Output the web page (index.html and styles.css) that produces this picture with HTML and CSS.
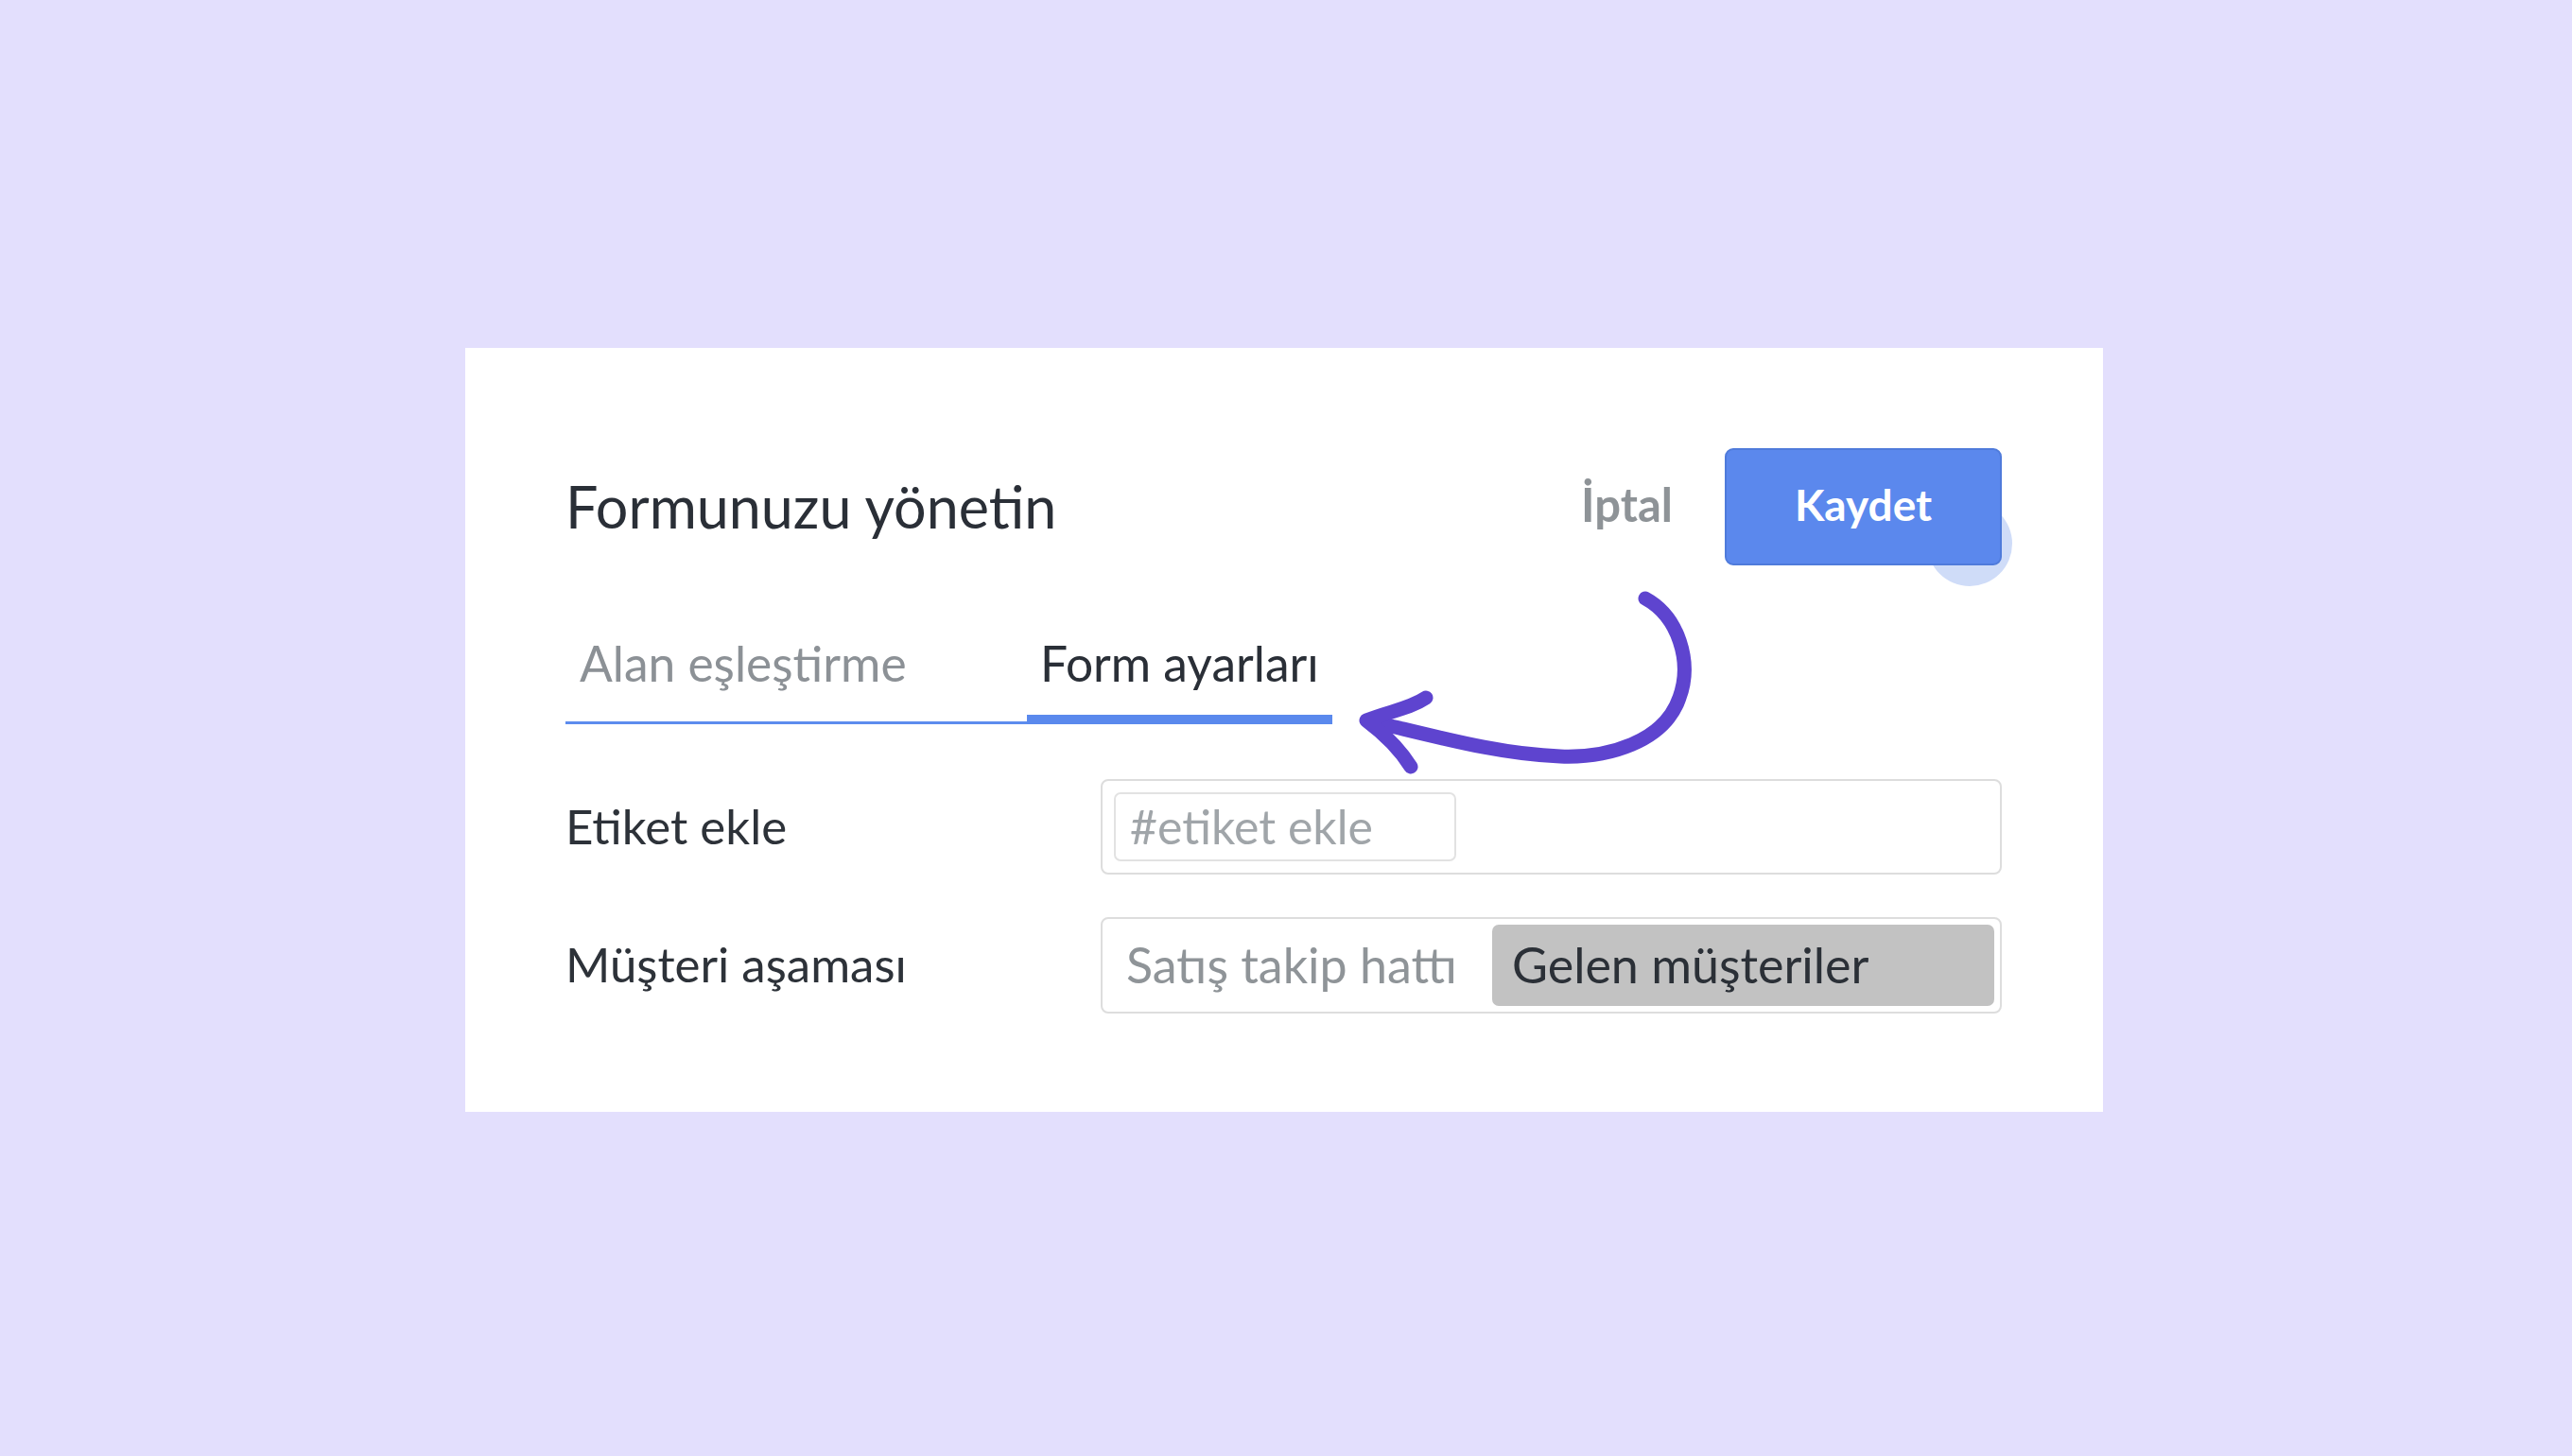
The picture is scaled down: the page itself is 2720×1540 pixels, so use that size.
FILE: index.html
```html
<!DOCTYPE html>
<html lang="tr">
<head>
<meta charset="utf-8">
<title>Formunuzu yönetin</title>
<link rel="stylesheet" href="styles.css">
</head>
<body>
<div class="card">
  <div class="header">
    <h1 class="title">Formunuzu yönetin</h1>
    <div class="actions">
      <button class="cancel">İptal</button>
      <div class="save-wrap"><button class="save">Kaydet</button></div>
    </div>
  </div>
  <div class="tabs">
    <div class="tab">Alan eşleştirme</div>
    <div class="tab active">Form ayarları</div>
  </div>
  <div class="form">
    <div class="label">Etiket ekle</div>
    <div class="field">
      <div class="tag-input">#etiket ekle</div>
    </div>
    <div class="label">Müşteri aşaması</div>
    <div class="field stage">
      <div class="stage-pipe">Satış takip hattı</div>
      <div class="stage-value">Gelen müşteriler</div>
    </div>
  </div>
  <svg class="arrow" viewBox="492 368 1732 808" width="1732" height="808" aria-hidden="true">
    <path d="M1740 633 C1775 652 1790 700 1776 738 C1760 785 1700 802 1650 800 C1590 798 1530 782 1463 766" />
    <path d="M1508 738 C1490 750 1470 752 1445 762 C1465 777 1482 795 1492 811" />
  </svg>
</div>
</body>
</html>
```

FILE: styles.css
```css
* { box-sizing: border-box; }

html, body {
  margin: 0;
  padding: 0;
}

body {
  width: 2720px;
  height: 1540px;
  background: #e3dffd;
  padding: 368px 0 0 492px;
  font-family: Lato, "Open Sans", "Liberation Sans", sans-serif;
  overflow: hidden;
}

.card {
  position: relative;
  width: 1732px;
  height: 808px;
  background: #ffffff;
  padding: 106px 107px 0 106px;
}

.header {
  display: flex;
  align-items: center;
  justify-content: space-between;
  height: 124px;
}

.title {
  margin: 0 0 2px;
  font-size: 61px;
  font-weight: 400;
  color: #2a2f37;
  line-height: 1;
}

.actions {
  display: flex;
  align-items: center;
  gap: 55px;
}

.cancel {
  border: 0;
  background: none;
  padding: 0 0 6px;
  font-family: inherit;
  font-size: 49px;
  font-weight: 700;
  color: #8e9397;
}

.save-wrap {
  position: relative;
}

.save-wrap::before {
  content: "";
  position: absolute;
  left: 214px;
  top: 56px;
  width: 90px;
  height: 90px;
  border-radius: 50%;
  background: #cfdcf8;
  z-index: 0;
}

.save {
  position: relative;
  z-index: 1;
  display: block;
  width: 293px;
  height: 124px;
  border: 2px solid #4f7bdb;
  border-radius: 9px;
  background: #5b88ed;
  color: #ffffff;
  padding: 0 0 6px;
  font-family: inherit;
  font-size: 46px;
  font-weight: 700;
}

.tabs {
  display: flex;
  margin-top: 73px;
}

.tab {
  font-size: 51.5px;
  line-height: 60px;
  padding: 0 0 35px 15px;
  color: #8c9196;
  box-shadow: inset 0 -3px 0 #5d8cee;
}

.tab:first-child {
  width: 488px;
}

.tab.active {
  width: 323px;
  padding-left: 14px;
  color: #2a2f37;
  box-shadow: inset 0 -10px 0 #5a89ed;
}

.form {
  display: grid;
  grid-template-columns: 566px 1fr;
  row-gap: 45px;
  align-items: center;
  margin-top: 58px;
}

.label {
  font-size: 51px;
  color: #2d3239;
  padding-bottom: 3px;
}

.field {
  border: 2px solid #dddddd;
  border-radius: 8px;
  padding: 12px;
}

.tag-input {
  width: 362px;
  height: 73px;
  border: 2px solid #e2e2e2;
  border-radius: 7px;
  padding: 0 0 2px 15px;
  display: flex;
  align-items: center;
  font-size: 50px;
  color: #a0a5a9;
}

.field.stage {
  display: flex;
  padding: 6px;
  height: 102px;
}

.stage-pipe {
  flex: 0 0 406px;
  display: flex;
  align-items: center;
  padding: 0 0 3px 19px;
  font-size: 52px;
  color: #8f9498;
}

.stage-value {
  flex: 1;
  display: flex;
  align-items: center;
  padding: 0 0 3px 21px;
  background: #c2c2c2;
  border-radius: 7px;
  font-size: 52px;
  color: #2b3037;
}

.arrow {
  position: absolute;
  left: 0;
  top: 0;
  pointer-events: none;
}

.arrow path {
  fill: none;
  stroke: #5e44cf;
  stroke-width: 15;
  stroke-linecap: round;
  stroke-linejoin: round;
}
```
